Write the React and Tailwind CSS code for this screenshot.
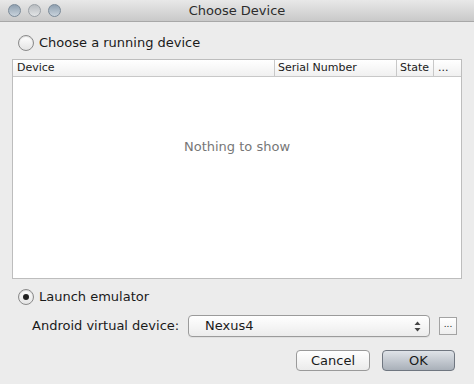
import React from 'react';

const font = { fontFamily: '"DejaVu Sans", "Liberation Sans", sans-serif' };

const Radio = ({ checked }) => (
  <span className="w-[16px] h-[16px] rounded-full border border-[#8a8a8a] bg-gradient-to-b from-[#ffffff] to-[#e4e4e4] shadow-[inset_0_1px_1px_rgba(0,0,0,0.15)] flex items-center justify-center">
    {checked && <span className="w-[6px] h-[6px] rounded-full bg-[#222]" />}
  </span>
);

const App = () => {
  return (
    <div className="w-[474px] h-[384px] bg-[#ececec] flex flex-col text-[#1a1a1a]" style={font}>
      {/* title bar */}
      <div className="h-[22px] border-b border-[#a8a8a8] bg-gradient-to-b from-[#e8e8e8] to-[#c9c9c9] flex items-center relative">
        <div className="absolute left-[8px] top-[4px] flex gap-[7px]">
          <span className="w-[13px] h-[13px] rounded-full border border-[#7a8a99] bg-gradient-to-b from-[#8fa0b0] to-[#c9d3dc]" />
          <span className="w-[13px] h-[13px] rounded-full border border-[#9aa0a6] bg-gradient-to-b from-[#b8bcc0] to-[#e2e4e6]" />
          <span className="w-[13px] h-[13px] rounded-full border border-[#7a8a99] bg-gradient-to-b from-[#8fa0b0] to-[#c9d3dc]" />
        </div>
        <div className="flex-1 text-center text-[13px] text-[#2c2c2c]">Choose Device</div>
      </div>

      <div className="flex items-center gap-[5px] pl-[18px] mt-[13px] h-[16px]">
        <Radio />
        <span className="text-[13px]">Choose a running device</span>
      </div>

      {/* table */}
      <div className="ml-[12px] mt-[8px] w-[450px] h-[220px] border border-[#bdbdbd] bg-white flex flex-col">
        <div className="h-[17px] border-b border-[#c8c8c8] bg-gradient-to-b from-[#ffffff] to-[#f0f0f0] flex text-[11px] leading-[16px]">
          <div className="w-[262px] pl-[4px] border-r border-[#c8c8c8]">Device</div>
          <div className="w-[122px] pl-[3px] border-r border-[#c8c8c8]">Serial Number</div>
          <div className="w-[37px] pl-[3px] border-r border-[#c8c8c8]">State</div>
          <div className="w-[20px] pl-[4px]">...</div>
        </div>
        <div className="pt-[62px] text-center text-[13px] leading-[16px] text-[#777]">
          Nothing to show
        </div>
      </div>

      <div className="flex items-center gap-[5px] pl-[18px] mt-[10px] h-[16px]">
        <Radio checked />
        <span className="text-[13px]">Launch emulator</span>
      </div>

      <div className="flex items-center mt-[10px] h-[22px]">
        <span className="pl-[32px] w-[188px] text-[13px]">Android virtual device:</span>
        <div className="w-[242px] h-[22px] rounded-[4px] border border-[#9b9b9b] bg-gradient-to-b from-[#ffffff] to-[#ececec] flex items-center shadow-[0_1px_0_rgba(0,0,0,0.05)]">
          <span className="pl-[16px] text-[13px] flex-1">Nexus4</span>
          <svg width="7" height="11" viewBox="0 0 7 11" className="mr-[8px]">
            <path d="M3.5 0.5 L6.5 4 L0.5 4 Z" fill="#444" />
            <path d="M3.5 10.5 L6.5 7 L0.5 7 Z" fill="#444" />
          </svg>
        </div>
        <div className="ml-[9px] w-[18px] h-[18px] border border-[#a3a3a3] bg-gradient-to-b from-[#ffffff] to-[#eeeeee] text-[9px] leading-[12px] text-center">...</div>
      </div>

      <div className="flex justify-end gap-[12px] mt-[13px] pr-[19px]">
        <button className="w-[74px] h-[21px] rounded-[4px] border border-[#9a9a9a] bg-gradient-to-b from-[#ffffff] to-[#ebebeb] text-[13px] leading-[19px]">Cancel</button>
        <button className="w-[73px] h-[21px] rounded-[4px] border border-[#6f7680] bg-gradient-to-b from-[#dfe3e8] to-[#a9b0b9] text-[13px] leading-[19px]">OK</button>
      </div>
    </div>
  );
};

export default App;
